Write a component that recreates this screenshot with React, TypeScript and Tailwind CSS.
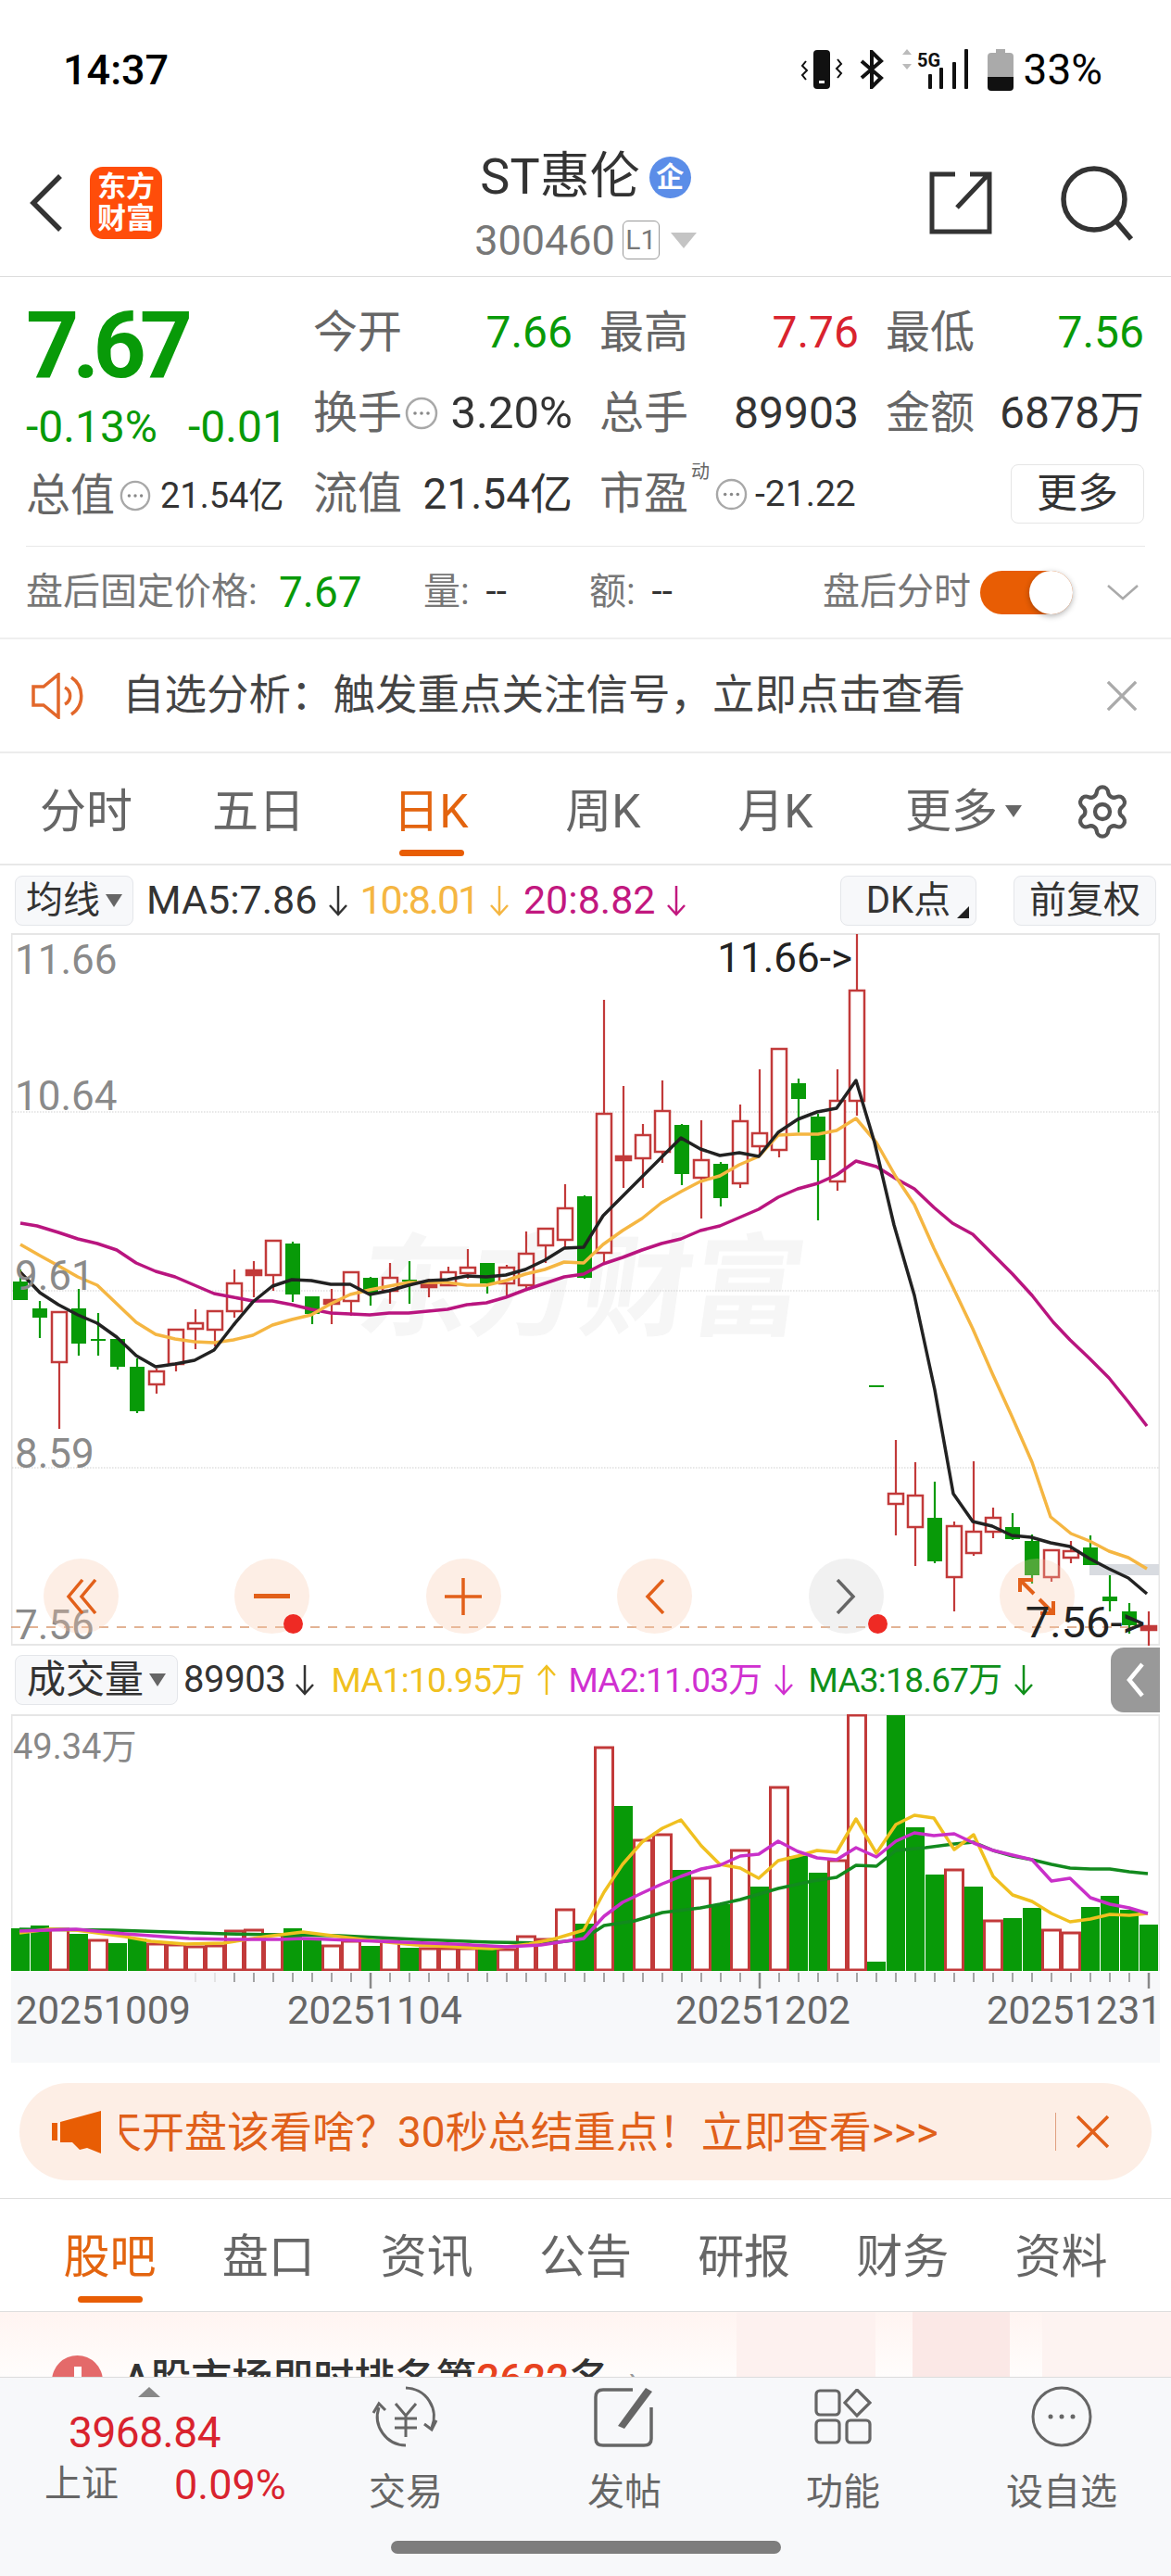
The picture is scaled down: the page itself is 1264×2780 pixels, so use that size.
import { Settings } from "lucide-react";

type Candle = [number, number, number, number, "r" | "g"];

// high, body top, body bottom, low (page y coordinates)
const candles: Candle[] = [
  [1370, 1383, 1403, 1403, "g"], [1404, 1412, 1422, 1444, "g"], [1416, 1416, 1470, 1542, "r"], [1391, 1412, 1450, 1463, "g"],
  [1417, 1445, 1447, 1463, "g"], [1445, 1445, 1475, 1478, "g"], [1466, 1475, 1523, 1525, "g"], [1477, 1480, 1494, 1504, "r"],
  [1435, 1435, 1472, 1480, "r"], [1413, 1428, 1434, 1456, "r"], [1415, 1415, 1435, 1453, "r"], [1370, 1385, 1415, 1422, "r"],
  [1361, 1371, 1376, 1400, "r"], [1339, 1339, 1376, 1393, "r"], [1340, 1342, 1397, 1405, "g"], [1399, 1399, 1418, 1429, "g"],
  [1391, 1403, 1407, 1429, "r"], [1373, 1373, 1404, 1420, "r"], [1378, 1379, 1395, 1409, "g"], [1363, 1379, 1393, 1407, "r"],
  [1361, 1381, 1383, 1407, "g"], [1380, 1386, 1389, 1400, "r"], [1367, 1373, 1387, 1387, "r"], [1348, 1368, 1374, 1380, "r"],
  [1363, 1363, 1385, 1396, "g"], [1365, 1368, 1385, 1398, "r"], [1329, 1353, 1387, 1392, "r"], [1326, 1326, 1344, 1363, "r"],
  [1278, 1304, 1338, 1347, "r"], [1290, 1291, 1379, 1380, "g"], [1079, 1202, 1352, 1363, "r"], [1172, 1248, 1252, 1282, "r"],
  [1213, 1225, 1250, 1282, "r"], [1166, 1199, 1243, 1255, "r"], [1213, 1214, 1267, 1279, "g"], [1209, 1252, 1271, 1315, "r"],
  [1254, 1256, 1293, 1302, "g"], [1192, 1210, 1277, 1282, "r"], [1154, 1223, 1237, 1248, "r"], [1132, 1132, 1241, 1249, "r"],
  [1164, 1169, 1186, 1222, "g"], [1202, 1205, 1252, 1317, "g"], [1154, 1188, 1275, 1285, "r"], [1008, 1069, 1188, 1204, "r"],
  [1495, 1495, 1497, 1497, "g"], [1554, 1612, 1623, 1657, "r"], [1578, 1614, 1648, 1690, "r"], [1599, 1638, 1685, 1687, "g"],
  [1642, 1647, 1702, 1739, "r"], [1577, 1653, 1676, 1679, "r"], [1627, 1638, 1653, 1660, "r"], [1633, 1648, 1661, 1662, "g"],
  [1656, 1663, 1700, 1709, "g"], [1673, 1673, 1702, 1707, "r"], [1663, 1674, 1681, 1687, "r"], [1657, 1670, 1689, 1689, "g"],
  [1700, 1723, 1728, 1739, "g"], [1730, 1739, 1754, 1763, "g"], [1739, 1755, 1759, 1776, "r"],
];

const ma5 = "22,1373 43,1395 63,1408 84,1419 105,1428 126,1443 147,1463 168,1475 189,1472 210,1468 231,1457 252,1430 273,1405 294,1388 315,1381 336,1382 357,1386 378,1386 399,1397 420,1393 441,1387 462,1382 483,1381 504,1377 525,1378 546,1376 567,1370 588,1360 609,1347 630,1346 651,1312 672,1291 693,1270 714,1249 735,1228 756,1240 777,1247 798,1244 819,1248 840,1222 861,1208 882,1200 903,1196 924,1166 944,1233 965,1322 987,1398 1009,1500 1029,1612 1050,1642 1071,1647 1092,1657 1113,1659 1134,1665 1155,1669 1176,1682 1197,1693 1218,1703 1238,1720";
const ma10 = "22,1343 43,1355 63,1366 84,1378 105,1387 126,1407 147,1427 168,1440 189,1445 210,1448 231,1449 252,1446 273,1441 294,1430 315,1424 336,1419 357,1407 378,1397 399,1392 420,1388 441,1384 462,1384 483,1384 504,1387 525,1387 546,1382 567,1375 588,1370 609,1362 630,1363 651,1343 672,1328 693,1315 714,1298 735,1286 756,1275 777,1269 798,1257 819,1248 840,1225 861,1224 883,1224 903,1220 924,1207 946,1233 967,1270 987,1300 1008,1347 1029,1390 1050,1434 1071,1482 1092,1528 1114,1578 1134,1637 1156,1655 1176,1663 1197,1674 1218,1681 1238,1693";
const ma20 = "22,1320 40,1323 63,1330 84,1337 105,1342 126,1349 147,1363 168,1372 189,1378 210,1387 231,1396 252,1400 273,1404 294,1404 315,1408 336,1413 357,1417 378,1418 399,1419 420,1417 441,1417 462,1415 483,1413 504,1408 525,1406 546,1400 567,1392 588,1385 609,1378 630,1375 651,1364 672,1357 693,1349 714,1342 735,1337 756,1328 777,1323 798,1314 819,1305 840,1292 861,1283 883,1277 903,1268 924,1253 946,1259 967,1272 987,1283 1008,1303 1028,1320 1050,1332 1071,1353 1093,1375 1114,1398 1137,1427 1155,1446 1176,1466 1197,1487 1218,1513 1238,1539";

// top of each volume bar
const volume: [number, "r" | "g"][] = [
  [2081, "g"], [2078, "g"], [2082, "r"], [2087, "g"], [2094, "r"], [2097, "g"], [2092, "g"], [2098, "r"], [2099, "r"], [2101, "r"],
  [2100, "r"], [2084, "r"], [2083, "r"], [2088, "r"], [2081, "g"], [2094, "g"], [2100, "r"], [2095, "r"], [2100, "g"], [2095, "r"],
  [2102, "g"], [2103, "r"], [2103, "r"], [2103, "r"], [2102, "g"], [2104, "r"], [2090, "r"], [2093, "r"], [2061, "r"], [2076, "g"],
  [1886, "r"], [1949, "g"], [1986, "r"], [1980, "r"], [2018, "g"], [2027, "r"], [2055, "g"], [1997, "r"], [2036, "g"], [1929, "r"],
  [2003, "g"], [2021, "g"], [2008, "r"], [1851, "r"], [2117, "g"], [1851, "g"], [1972, "g"], [2023, "g"], [2018, "r"], [2036, "g"],
  [2073, "r"], [2070, "g"], [2059, "g"], [2083, "r"], [2086, "r"], [2058, "g"], [2046, "g"], [2061, "g"], [2077, "g"],
];

const vma1 = "21,2086 53,2082 82,2083 135,2090 163,2095 200,2098 241,2097 286,2090 327,2085 367,2090 408,2095 449,2099 490,2101 531,2103 571,2098 600,2092 630,2083 652,2042 672,2012 693,1988 715,1973 735,1964 757,1992 777,2012 799,2016 819,2027 840,2008 861,2003 882,1997 903,1999 924,1963 946,2000 967,1969 987,1959 1008,1962 1030,1996 1051,1980 1072,2025 1093,2045 1114,2052 1135,2065 1155,2074 1177,2071 1198,2066 1219,2067 1239,2065";
const vma2 = "21,2084 82,2082 135,2087 204,2092 245,2093 302,2093 327,2092 408,2095 490,2098 547,2101 584,2099 630,2092 652,2068 672,2053 693,2043 715,2033 735,2025 757,2017 777,2013 799,2003 819,2001 840,1987 861,1998 882,2005 903,2007 924,1994 946,2004 967,1987 987,1978 1008,1981 1030,1979 1051,1989 1072,1997 1093,2002 1114,2007 1135,2030 1155,2027 1177,2048 1198,2055 1219,2059 1239,2065";
const vma3 = "21,2082 122,2083 245,2087 367,2089 449,2093 531,2096 592,2097 629,2093 652,2078 685,2073 715,2064 756,2059 777,2055 799,2050 840,2038 877,2030 903,2026 924,2013 946,2014 967,1997 999,1994 1030,1990 1051,1988 1072,1997 1093,2003 1114,2007 1135,2012 1155,2016 1177,2017 1198,2017 1219,2020 1239,2022";

const cx = (i: number) => 22 + 21 * i;
const RED = "#c23a3a";
const GREEN = "#089a08";

function Dots({ className }: { className: string }) {
  return (
    <svg viewBox="0 0 36 36" className={className} fill="none">
      <circle cx="18" cy="18" r="16" stroke="#a8a8a8" strokeWidth="2.5" />
      <circle cx="11" cy="18" r="1.8" fill="#888" />
      <circle cx="18" cy="18" r="1.8" fill="#888" />
      <circle cx="25" cy="18" r="1.8" fill="#888" />
    </svg>
  );
}

function Cross({ color, width }: { color: string; width: number }) {
  return (
    <svg viewBox="0 0 36 36" style={{ width, height: width }} fill="none" stroke={color} strokeWidth="3.5">
      <path d="M2 2 L34 34 M34 2 L2 34" />
    </svg>
  );
}

function Arrow({ up, className }: { up?: boolean; className?: string }) {
  return (
    <svg viewBox="0 0 22 34" className={`w-[22px] h-[34px] shrink-0 ${className ?? ""}`} fill="none" stroke="currentColor" strokeWidth="2.5">
      <path d={up ? "M11 33 V2 M2 12 L11 2 L20 12" : "M11 1 V32 M2 22 L11 32 L20 22"} />
    </svg>
  );
}

function StatusBar() {
  return (
    <div className="h-[150px] flex items-center justify-between pl-[68px] pr-[74px] text-black">
      <span className="text-[45px] font-medium leading-none">14:37</span>
      <div className="flex items-center">
        <svg viewBox="0 0 46 42" className="w-[46px] h-[42px]">
          <rect x="14" y="0" width="18" height="42" rx="4" fill="#111" />
          <rect x="20" y="33" width="6" height="3" fill="#fff" />
          <path d="M6 12 L2 17 L7 22 L2 27 L6 32 M40 10 L44 15 L39 20 L44 25 L40 30" stroke="#111" strokeWidth="2" fill="none" />
        </svg>
        <svg viewBox="0 0 28 42" className="w-[28px] h-[42px] ml-[17px]">
          <path d="M3 12 L24 30 L14 40 V2 L24 12 L3 30" stroke="#111" strokeWidth="4" fill="none" />
        </svg>
        <svg viewBox="0 0 74 44" className="w-[74px] h-[44px] ml-[18px]">
          <path d="M6 0 L11 6 H1 Z M6 22 L11 16 H1 Z" fill="#bbb" />
          <text x="17" y="19" fontSize="20" fontWeight="700" fill="#111">5G</text>
          <rect x="29" y="27" width="4" height="16" rx="1" fill="#111" />
          <rect x="41" y="20" width="4" height="23" rx="1" fill="#111" />
          <rect x="55" y="14" width="4" height="29" rx="1" fill="#111" />
          <rect x="68" y="0" width="4" height="43" rx="1" fill="#111" />
        </svg>
        <svg viewBox="0 0 28 45" className="w-[28px] h-[45px] ml-[19px]">
          <path d="M9 0 H19 V4 H24 Q28 4 28 8 V30 H0 V8 Q0 4 4 4 H9 Z" fill="#aaa" />
          <path d="M0 30 H28 V41 Q28 45 24 45 H4 Q0 45 0 41 Z" fill="#111" />
        </svg>
        <span className="text-[46px] leading-none ml-[11px]">33%</span>
      </div>
    </div>
  );
}

function Header() {
  return (
    <div className="h-[149px] grid grid-cols-[1fr_auto_1fr] border-b border-[#dcdcdc]">
      <div className="flex items-start pt-[30px] pl-[32px]">
        <svg viewBox="0 0 36 62" className="w-[36px] h-[62px] mt-[8px]" fill="none" stroke="#333" strokeWidth="5.5">
          <path d="M33 2 L4 31 L33 60" />
        </svg>
        <div className="ml-[29px] w-[78px] h-[78px] rounded-[14px] bg-[#ff4d0a] text-white text-[31px] font-bold leading-[34px] flex flex-col items-center justify-center">
          <span>东方</span>
          <span>财富</span>
        </div>
      </div>
      <div className="flex flex-col items-center pt-[10px]">
        <div className="h-[62px] flex items-center">
          <span className="text-[54px] leading-none text-[#333]">ST惠伦</span>
          <span className="ml-[10px] w-[45px] h-[45px] rounded-full bg-[#5b8de8] text-white text-[30px] font-bold leading-none flex items-center justify-center">企</span>
        </div>
        <div className="h-[46px] mt-[14px] flex items-center text-[#777]">
          <span className="text-[45px] leading-none">300460</span>
          <span className="ml-[8px] w-[40px] h-[42px] rounded-[6px] border border-[#999] text-[30px] leading-none flex items-center justify-center">L1</span>
          <span className="ml-[12px] w-0 h-0 border-x-[14px] border-x-transparent border-t-[17px] border-t-[#c4c4c4]" />
        </div>
      </div>
      <div className="flex items-start justify-end pt-[28px] pr-[40px]">
        <svg viewBox="0 0 68 70" className="w-[68px] h-[70px] mt-[6px]" fill="none" stroke="#333" strokeWidth="5">
          <path d="M28 4 H3 V66 H65 V24 M30 40 L64 4 M44 4 H65 V24" />
        </svg>
        <svg viewBox="0 0 80 82" className="w-[80px] h-[82px] ml-[73px]" fill="none" stroke="#333" strokeWidth="5.5">
          <circle cx="37" cy="37" r="33" />
          <path d="M60 60 L77 80" />
        </svg>
      </div>
    </div>
  );
}

function Pair({ label, value, color }: { label: string; value: string; color: string }) {
  return (
    <div className="flex items-center justify-between h-[87px]">
      <span className="text-[48px] leading-none text-[#666]">{label}</span>
      <span className="text-[48px] leading-none" style={{ color }}>{value}</span>
    </div>
  );
}

function Stats() {
  return (
    <div className="h-[291px] mx-[28px] border-b border-[#e8e8e8] pt-[16px] flex">
      <div className="w-[310px] shrink-0">
        <div className="h-[116px] flex items-center text-[100px] font-bold leading-none tracking-[-0.07em] text-[#089a08]">7.67</div>
        <div className="h-[60px] flex items-center text-[48px] leading-none text-[#089a08]">
          <span className="w-[175px]">-0.13%</span>
          <span>-0.01</span>
        </div>
        <div className="h-[88px] flex items-center text-[#333]">
          <span className="text-[48px] leading-none text-[#666]">总值</span>
          <Dots className="w-[34px] h-[34px] ml-[5px]" />
          <span className="text-[38px] leading-none ml-[10px] whitespace-nowrap">21.54亿</span>
        </div>
      </div>
      <div className="flex-1 grid grid-cols-[280px_280px_279px] gap-x-[29px] content-start">
        <Pair label="今开" value="7.66" color="#089a08" />
        <Pair label="最高" value="7.76" color="#d9232e" />
        <Pair label="最低" value="7.56" color="#089a08" />
        <div className="flex items-center h-[87px]">
          <span className="text-[48px] leading-none text-[#666]">换手</span>
          <Dots className="w-[36px] h-[36px] ml-[3px]" />
          <span className="ml-auto text-[49px] leading-none text-[#333]">3.20%</span>
        </div>
        <Pair label="总手" value="89903" color="#333" />
        <Pair label="金额" value="6878万" color="#333" />
        <div className="flex items-center justify-between h-[88px]">
          <span className="text-[48px] leading-none text-[#666]">流值</span>
          <span className="text-[46px] leading-none text-[#333]">21.54亿</span>
        </div>
        <div className="flex items-center h-[88px] relative">
          <span className="text-[48px] leading-none text-[#666]">市盈</span>
          <span className="absolute left-[99px] top-[10px] text-[20px] leading-none text-[#666]">动</span>
          <Dots className="w-[35px] h-[35px] ml-[29px]" />
          <span className="text-[39px] leading-none text-[#333] ml-[8px] whitespace-nowrap">-21.22</span>
        </div>
        <div className="flex items-center justify-end h-[88px]">
          <div className="w-[144px] h-[64px] rounded-[8px] border border-[#e5e5e5] text-[44px] leading-none text-[#333] flex items-center justify-center">更多</div>
        </div>
      </div>
    </div>
  );
}

function AfterHours() {
  return (
    <div className="h-[100px] border-b-2 border-[#efefef] pl-[28px] pr-[34px] flex items-center text-[40px] leading-none text-[#777]">
      <span className="w-[273px]">盘后固定价格:</span>
      <span className="text-[46px] text-[#089a08] w-[84px]">7.67</span>
      <span className="ml-[72px] w-[179px]">量: <span className="ml-[8px] text-[#333]">--</span></span>
      <span>额: <span className="ml-[8px] text-[#333]">--</span></span>
      <span className="ml-auto">盘后分时</span>
      <div className="ml-[10px] w-[100px] h-[47px] rounded-full bg-[#e85d04] relative">
        <div className="absolute right-0 top-0 w-[47px] h-[47px] rounded-full bg-white shadow-[0_2px_6px_rgba(0,0,0,0.3)]" />
      </div>
      <svg viewBox="0 0 36 18" className="w-[36px] h-[18px] ml-[36px]" fill="none" stroke="#aaa" strokeWidth="2.5">
        <path d="M2 2 L18 16 L34 2" />
      </svg>
    </div>
  );
}

function Notice() {
  return (
    <div className="h-[123px] border-b-2 border-[#ececec] pl-[34px] pr-[36px] flex items-center">
      <svg viewBox="0 0 60 50" className="w-[60px] h-[50px]" fill="none" stroke="#e2672a" strokeWidth="3.5">
        <path d="M2 15 H13 L29 2 V48 L13 35 H2 Z" />
        <path d="M36 16 A10 10 0 0 1 36 34" />
        <path d="M43 5 A24 24 0 0 1 43 45" />
      </svg>
      <span className="ml-[38px] text-[45.5px] leading-none text-[#444] whitespace-nowrap">{"自选分析\uFF1A触发重点关注信号\uFF0C立即点击查看"}</span>
      <div className="ml-auto">
        <Cross color="#aaa" width={34} />
      </div>
    </div>
  );
}

function ChartTabs() {
  const tabs = ["分时", "五日", "日K", "周K", "月K"];
  return (
    <div className="h-[121px] border-b-2 border-[#e8e8e8] flex">
      <div className="w-[1116px] grid grid-cols-6">
        {tabs.map((t) => (
          <div key={t} className={`relative flex items-center justify-center pt-[6px] text-[50px] leading-none ${t === "日K" ? "text-[#e3640f]" : "text-[#666]"}`}>
            {t}
            {t === "日K" && <div className="absolute bottom-[8px] left-[59px] w-[70px] h-[7px] rounded-full bg-[#e85d04]" />}
          </div>
        ))}
        <div className="flex items-center pl-[47px] pt-[6px] text-[50px] leading-none text-[#666]">
          更多
          <span className="ml-[8px] w-0 h-0 border-x-[9px] border-x-transparent border-t-[13px] border-t-[#666]" />
        </div>
      </div>
      <div className="flex-1 flex items-center justify-center pt-[6px]">
        <Settings className="w-[64px] h-[64px] text-[#555]" strokeWidth={1.6} />
      </div>
    </div>
  );
}

function Select({ label, className, caret }: { label: string; className: string; caret?: boolean }) {
  return (
    <div className={`h-[54px] rounded-[8px] border border-[#e4e6ea] bg-[#f7f8fa] flex items-center justify-center text-[#333] text-[40px] leading-none shrink-0 ${className}`}>
      {label}
      {caret && <span className="ml-[6px] w-0 h-0 border-x-[9px] border-x-transparent border-t-[14px] border-t-[#666]" />}
    </div>
  );
}

function MaRow() {
  return (
    <div className="h-[73px] pl-[16px] pr-[16px] pt-[2px] flex items-center text-[43px] leading-none whitespace-nowrap">
      <Select label="均线" caret className="w-[128px]" />
      <span className="ml-[14px] text-[#333]">MA5:7.86</span>
      <Arrow className="ml-[12px] text-[#333]" />
      <span className="ml-[12px] text-[#f5b642] tracking-[-0.05em]">10:8.01</span>
      <Arrow className="ml-[12px] text-[#f5b642]" />
      <span className="ml-[15px] text-[#c2187f]">20:8.82</span>
      <Arrow className="ml-[11px] text-[#c2187f]" />
      <div className="ml-auto relative">
        <Select label="DK点" className="w-[147px]" />
        <span className="absolute right-[8px] bottom-[8px] w-0 h-0 border-l-[13px] border-l-transparent border-b-[13px] border-b-[#222]" />
      </div>
      <Select label="前复权" className="w-[154px] ml-[40px]" />
    </div>
  );
}

function PriceChart() {
  const axis = "absolute left-[4px] text-[44px] leading-none text-[#8a8a8a]";
  const circle = "w-[81px] h-[81px] rounded-full flex items-center justify-center relative";
  return (
    <div className="relative mx-[12px] h-[769px]">
      <div className="absolute left-[376px] top-[324px] text-[120px] font-bold leading-none text-[#f6f6f6] whitespace-nowrap skew-x-[-8deg]">东方财富</div>
      <svg viewBox="12 1007 1240 769" className="absolute inset-0 w-[1240px] h-[769px]" fill="none">
        <path d="M12.5 1777 V1008 H1251.5 V1777" stroke="#e6e6e6" strokeWidth="2" />
        <path d="M12 1775 H1252" stroke="#e6e6e6" strokeWidth="2" />
        {[1200, 1393, 1584].map((y) => (
          <path key={y} d={`M13 ${y} H1251`} stroke="#cfcfcf" strokeWidth="1" strokeDasharray="1.5 1.5" />
        ))}
        <rect x="1176" y="1688" width="75" height="12" fill="#d8dbe0" />
        <path d="M12 1756 H1236" stroke="#d99a72" strokeWidth="1.5" strokeDasharray="10 9" />
        {candles.map(([high, top, bottom, low, c], i) => {
          const x = cx(i);
          const thin = bottom - top < 6;
          if (c === "g") {
            return (
              <g key={i}>
                <path d={`M${x} ${high} V${low}`} stroke={GREEN} strokeWidth="2.2" />
                <rect x={x - 8} y={top} width="16" height={bottom - top} fill={GREEN} />
              </g>
            );
          }
          return (
            <g key={i}>
              <path d={`M${x} ${high} V${low}`} stroke={RED} strokeWidth="2.2" />
              <rect x={x - 8} y={top} width="16" height={bottom - top} fill={thin ? RED : "#fff"} stroke={RED} strokeWidth="2.5" />
            </g>
          );
        })}
        <polyline points={ma20} stroke="#b9157f" strokeWidth="3.5" strokeLinejoin="round" />
        <polyline points={ma10} stroke="#f5b642" strokeWidth="3.5" strokeLinejoin="round" />
        <polyline points={ma5} stroke="#222" strokeWidth="3.5" strokeLinejoin="round" />
      </svg>

      <span className={`${axis} top-[7px]`}>11.66</span>
      <span className={`${axis} top-[154px]`}>10.64</span>
      <span className={`${axis} top-[348px]`}>9.61</span>
      <span className={`${axis} top-[540px]`}>8.59</span>
      <span className={`${axis} top-[725px]`}>7.56</span>

      <div className="absolute left-[35px] top-[675px] flex gap-[125.4px]">
        <div className={`${circle} bg-[#f8c8aa]/30`}>
          <svg viewBox="0 0 34 38" className="w-[34px] h-[38px]" fill="none" stroke="#e2601a" strokeWidth="3.5">
            <path d="M18 1 L3 19 L18 37 M32 1 L17 19 L32 37" />
          </svg>
        </div>
        <div className={`${circle} bg-[#f8c8aa]/30`}>
          <div className="w-[39px] h-[5px] bg-[#e2601a]" />
          <div className="absolute left-[53px] top-[60px] w-[21px] h-[21px] rounded-full bg-[#ee2a24]" />
        </div>
        <div className={`${circle} bg-[#f8c8aa]/30`}>
          <svg viewBox="0 0 40 40" className="w-[40px] h-[40px]" fill="none" stroke="#e2601a" strokeWidth="3.5">
            <path d="M0 20 H40 M20 0 V40" />
          </svg>
        </div>
        <div className={`${circle} bg-[#f8c8aa]/30`}>
          <svg viewBox="0 0 22 38" className="w-[22px] h-[38px]" fill="none" stroke="#e2601a" strokeWidth="3.5">
            <path d="M20 1 L3 19 L20 37" />
          </svg>
        </div>
        <div className={`${circle} bg-[#c8c8c8]/25`}>
          <svg viewBox="0 0 22 38" className="w-[22px] h-[38px]" fill="none" stroke="#666" strokeWidth="3.5">
            <path d="M2 1 L19 19 L2 37" />
          </svg>
          <div className="absolute left-[64px] top-[60px] w-[21px] h-[21px] rounded-full bg-[#ee2a24]" />
        </div>
        <div className={`${circle} bg-[#f8c8aa]/30`}>
          <svg viewBox="0 0 40 40" className="w-[40px] h-[40px]" fill="none" stroke="#e2601a" strokeWidth="4">
            <path d="M2 15 V2 H16 M2 2 L17 17 M38 25 V38 H24 M38 38 L23 23" />
          </svg>
        </div>
      </div>

      <span className="absolute right-[332px] top-[5px] text-[44px] leading-none text-[#222]">11.66-&gt;</span>
      <span className="absolute right-[16px] top-[720px] text-[47px] leading-none text-[#222]">7.56-&gt;</span>
    </div>
  );
}

function VolumeRow() {
  return (
    <div className="h-[74px] pl-[16px] flex items-center text-[37px] leading-none whitespace-nowrap relative">
      <Select label="成交量" caret className="w-[176px] !text-[42px]" />
      <span className="ml-[6px] text-[#333] text-[40px] tracking-[-0.01em]">89903</span>
      <Arrow className="ml-[10px] text-[#333]" />
      <span className="ml-[17px] text-[#f0c020] tracking-[-0.02em]">MA1:10.95万</span>
      <Arrow up className="ml-[13px] text-[#f0c020]" />
      <span className="ml-[12px] text-[#d030d0] tracking-[-0.02em]">MA2:11.03万</span>
      <Arrow className="ml-[12px] text-[#d030d0]" />
      <span className="ml-[16px] text-[#0f8f1a] tracking-[-0.02em]">MA3:18.67万</span>
      <Arrow className="ml-[12px] text-[#0f8f1a]" />
      <div className="absolute right-[12px] top-[2px] w-[53px] h-[70px] rounded-l-[14px] bg-[#999] flex items-center justify-center">
        <svg viewBox="0 0 20 38" className="w-[20px] h-[38px]" fill="none" stroke="#fff" strokeWidth="4.5">
          <path d="M17 2 L3 19 L17 36" />
        </svg>
      </div>
    </div>
  );
}

function VolumeChart() {
  return (
    <div className="relative mx-[12px] h-[277px]">
      <svg viewBox="12 1850 1240 277" className="absolute inset-0 w-[1240px] h-[277px]" fill="none">
        <path d="M12.5 2127 V1851 H1251.5 V2127" stroke="#e6e6e6" strokeWidth="2" />
        {volume.map(([top, c], i) => {
          const x = cx(i);
          return c === "g" ? (
            <rect key={i} x={x - 10} y={top} width="20" height={2127 - top} fill={GREEN} />
          ) : (
            <rect key={i} x={x - 9.5} y={top} width="19" height={2126 - top} fill="#fff" stroke={RED} strokeWidth="3" />
          );
        })}
        <polyline points={vma3} stroke="#128a1e" strokeWidth="3.5" strokeLinejoin="round" />
        <polyline points={vma1} stroke="#f0c020" strokeWidth="3.5" strokeLinejoin="round" />
        <polyline points={vma2} stroke="#c930c9" strokeWidth="3.5" strokeLinejoin="round" />
      </svg>
      <span className="absolute left-[2px] top-[16px] text-[38px] leading-none text-[#888]">49.34万</span>
    </div>
  );
}

function DateRow() {
  const ticks = Array.from({ length: 50 }, (_, n) => n + 9);
  const label = "absolute top-[22px] text-[42px] leading-none text-[#666]";
  return (
    <div className="relative mx-[12px] h-[99px] bg-[#f7f8fa]">
      <svg viewBox="12 2127 1240 30" className="absolute left-0 top-0 w-[1240px] h-[30px]" fill="none">
        {ticks.map((i) => {
          const long = i === 18 || i === 38 || i === 58;
          return <path key={i} d={`M${cx(i)} 2129 V${long ? 2146 : 2139}`} stroke={i < 11 ? "#ddd" : "#888"} strokeWidth={long ? 2.5 : 1.5} />;
        })}
      </svg>
      <span className={`${label} left-[5px]`}>20251009</span>
      <span className={`${label} left-[298px]`}>20251104</span>
      <span className={`${label} left-[717px]`}>20251202</span>
      <span className={`${label} left-[1053px]`}>20251231</span>
    </div>
  );
}

function Promo() {
  return (
    <div className="h-[147px] border-b border-[#dedede] pt-[22px] px-[21px]">
      <div className="h-[105px] rounded-full bg-[#fdeee5] flex items-center pl-[35px] pr-[45px]">
        <svg viewBox="0 0 54 46" className="w-[54px] h-[46px] shrink-0" fill="#e85d04">
          <rect x="0" y="13" width="6" height="19" />
          <path d="M9 12 L53 0 V46 L38 40 L30 42 L22 34 H9 Z" />
        </svg>
        <div className="ml-[19px] w-[900px] overflow-hidden">
          <span className="block ml-[-22px] text-[46px] leading-none text-[#e0601a] whitespace-nowrap">{"天开盘该看啥\uFF1F30秒总结重点\uFF01立即查看>>>"}</span>
        </div>
        <div className="ml-auto w-px h-[41px] bg-[#e0a080]" />
        <div className="ml-[21px]">
          <Cross color="#e2601a" width={37} />
        </div>
      </div>
    </div>
  );
}

function InfoTabs() {
  const tabs = ["股吧", "盘口", "资讯", "公告", "研报", "财务", "资料"];
  return (
    <div className="h-[122px] border-b border-[#dedede] px-[33px] grid grid-cols-7">
      {tabs.map((t, i) => (
        <div key={t} className={`relative flex items-center justify-center pt-[4px] text-[50px] leading-none ${i === 0 ? "text-[#e3640f]" : "text-[#666]"}`}>
          {t}
          {i === 0 && <div className="absolute bottom-[9px] left-[51px] w-[70px] h-[7px] rounded-full bg-[#e85d04]" />}
        </div>
      ))}
    </div>
  );
}

function Peek() {
  return (
    <div className="relative h-[70px] overflow-hidden bg-gradient-to-b from-[#fff4f1] to-[#fffdfc]">
      <div className="absolute left-[795px] top-0 w-[150px] h-[70px] bg-[#fdf1ef]" />
      <div className="absolute left-[985px] top-0 w-[105px] h-[70px] bg-[#fbe8e6]" />
      <div className="absolute left-[1125px] top-0 w-[139px] h-[70px] bg-[#fdf3f1]" />
      <div className="relative flex items-start pl-[56px] pt-[47px]">
        <div className="w-[55px] h-[55px] rounded-full bg-[#e46a6a] flex justify-center pt-[12px]">
          <div className="w-[8px] h-[20px] bg-white" />
        </div>
        <span className="ml-[22px] mt-[4px] text-[44px] font-medium leading-none text-[#333] whitespace-nowrap">
          A股市场即时排名第<span className="text-[#e8431f]">2622</span>名
        </span>
        <span className="ml-[20px] mt-[6px] text-[40px] leading-none text-[#999]">›</span>
      </div>
    </div>
  );
}

function NavItem({ label, icon }: { label: string; icon: React.ReactNode }) {
  return (
    <div className="w-[236px] flex flex-col items-center">
      <div className="h-[84px] flex items-center justify-center">{icon}</div>
      <span className="mt-[20px] text-[40px] leading-none text-[#666]">{label}</span>
    </div>
  );
}

function BottomNav() {
  return (
    <div className="relative h-[215px] bg-[#f7f8fa] border-t border-[#dcdcdc]">
      <div className="flex">
        <div className="w-[320px] relative h-[150px]">
          <span className="absolute left-[149px] top-[10px] w-0 h-0 border-x-[12px] border-x-transparent border-b-[11px] border-b-[#888]" />
          <span className="absolute left-[74px] top-[36px] text-[46px] leading-none tracking-[-0.01em] text-[#d9232e]">3968.84</span>
          <span className="absolute left-[48px] top-[95px] text-[40px] leading-none text-[#666]">上证</span>
          <span className="absolute left-[188px] top-[93px] text-[45px] leading-none text-[#d9232e]">0.09%</span>
        </div>
        <NavItem
          label="交易"
          icon={
            <svg viewBox="0 0 76 68" className="w-[76px] h-[68px]" fill="none" stroke="#666" strokeWidth="3">
              <path d="M38 3 A31 31 0 0 1 66 46 M38 65 A31 31 0 0 1 9 24" />
              <path d="M71 38 L66 48 L58 42 M3 30 L9 20 L16 27" />
              <path d="M27 20 L38 33 L49 20 M26 36 H50 M26 46 H50 M38 33 V56" />
            </svg>
          }
        />
        <NavItem
          label="发帖"
          icon={
            <svg viewBox="0 0 66 68" className="w-[66px] h-[68px]" fill="none" stroke="#666" strokeWidth="3.5">
              <path d="M42 5 H10 Q2 5 2 13 V58 Q2 65 10 65 H54 Q62 65 62 58 V24" />
              <path d="M26 44 L56 3 L63 7 L33 47 Z" fill="#666" stroke="none" />
            </svg>
          }
        />
        <NavItem
          label="功能"
          icon={
            <svg viewBox="0 0 62 60" className="w-[62px] h-[60px]" fill="none" stroke="#666" strokeWidth="3.2">
              <rect x="2" y="2" width="25" height="26" rx="4" />
              <path d="M46 1 L60 15 L46 29 L33 15 Z" />
              <rect x="2" y="34" width="25" height="24" rx="4" />
              <rect x="35" y="34" width="25" height="24" rx="4" />
            </svg>
          }
        />
        <NavItem
          label="设自选"
          icon={
            <svg viewBox="0 0 66 66" className="w-[66px] h-[66px]" fill="none" stroke="#666" strokeWidth="3">
              <circle cx="33" cy="33" r="31" />
              <circle cx="21" cy="33" r="2.5" fill="#666" stroke="none" />
              <circle cx="33" cy="33" r="2.5" fill="#666" stroke="none" />
              <circle cx="45" cy="33" r="2.5" fill="#666" stroke="none" />
            </svg>
          }
        />
      </div>
      <div className="absolute left-[422px] top-[176px] w-[421px] h-[14px] rounded-full bg-[#7d7d7d]" />
    </div>
  );
}

export default function App() {
  return (
    <div className="w-full h-[2780px] overflow-hidden bg-white font-[Roboto,'Noto_Sans_CJK_SC',sans-serif]">
      <StatusBar />
      <Header />
      <Stats />
      <AfterHours />
      <Notice />
      <ChartTabs />
      <MaRow />
      <PriceChart />
      <VolumeRow />
      <VolumeChart />
      <DateRow />
      <Promo />
      <InfoTabs />
      <Peek />
      <BottomNav />
    </div>
  );
}
